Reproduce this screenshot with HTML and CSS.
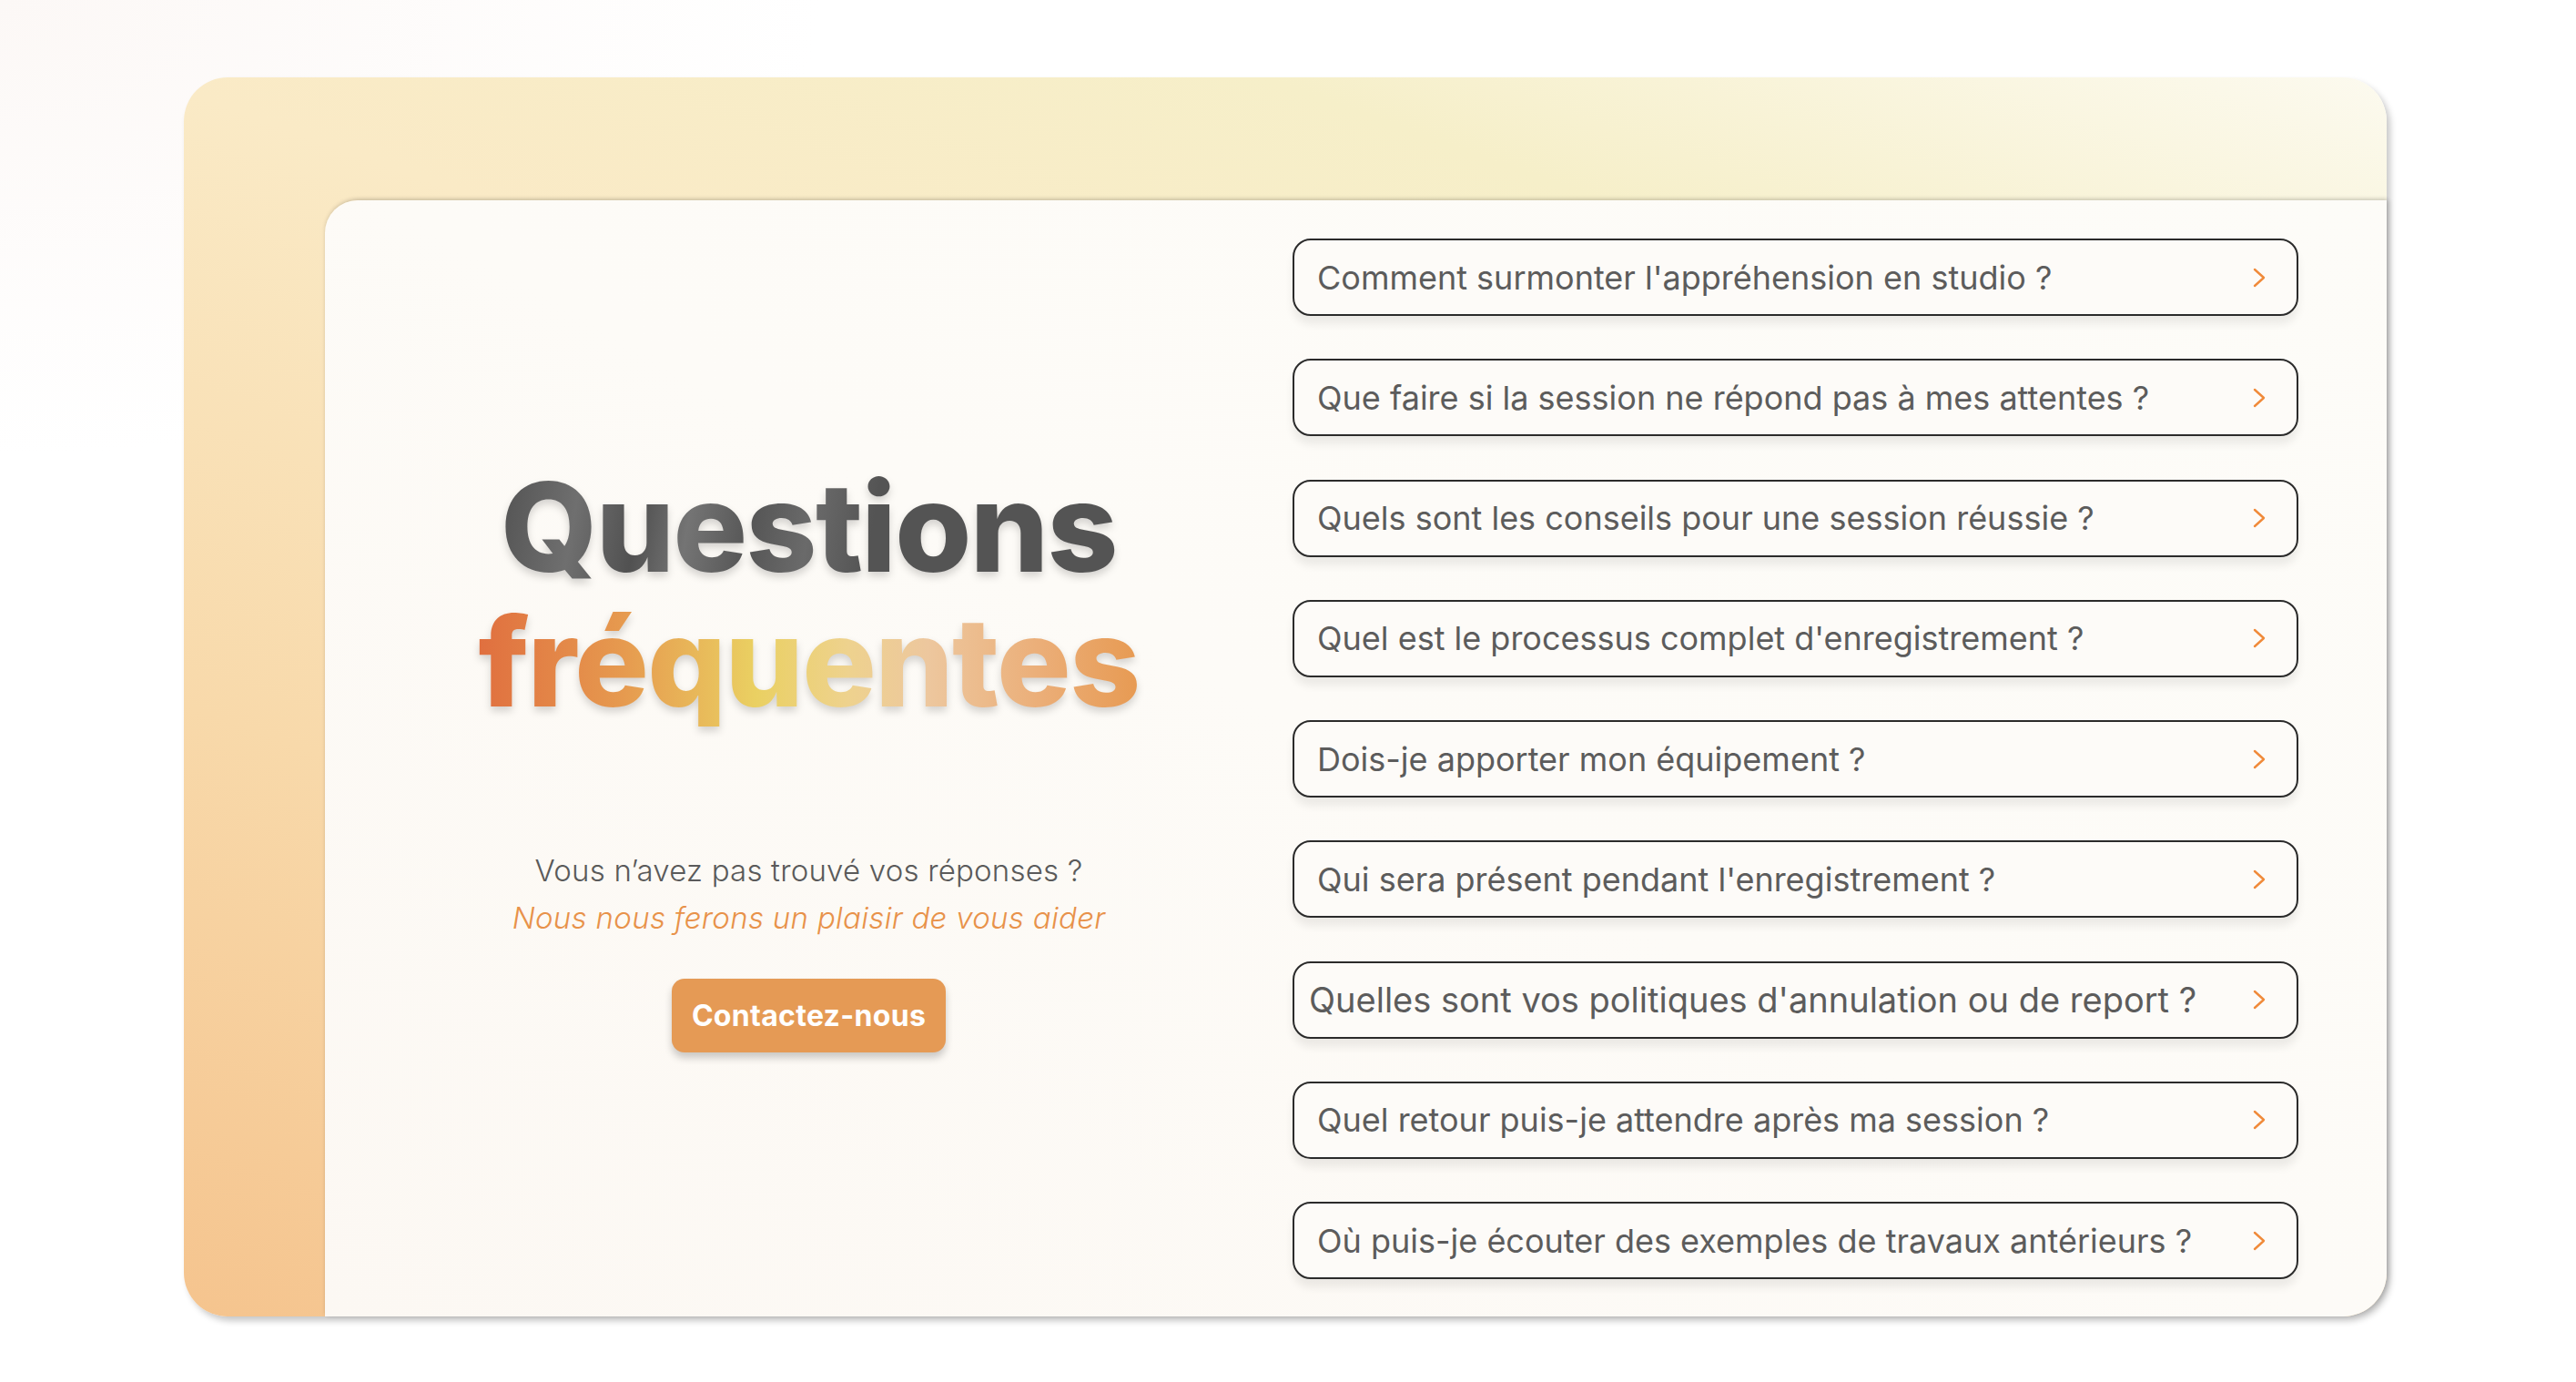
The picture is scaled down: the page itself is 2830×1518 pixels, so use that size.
FILE: index.html
```html
<!DOCTYPE html>
<html lang="fr">
<head>
<meta charset="utf-8">
<title>Questions fréquentes</title>
<link rel="stylesheet" href="styles.css">
</head>
<body>
<div class="page">
  <section class="frame">
    <div class="panel">
      <div class="intro">
        <h1 class="title">
          <span class="title-top">Questions</span>
          <span class="title-bottom">fréquentes</span>
        </h1>
        <p class="lead">Vous n’avez pas trouvé vos réponses ?</p>
        <p class="lead-accent">Nous nous ferons un plaisir de vous aider</p>
        <a class="cta" href="#">Contactez-nous</a>
      </div>
      <ul class="faq">
        <li class="faq-item"><span class="faq-q">Comment surmonter l'appréhension en studio ?</span><svg class="chev" viewBox="0 0 14 22"><polyline points="2,2 12,11 2,20"/></svg></li>
        <li class="faq-item"><span class="faq-q">Que faire si la session ne répond pas à mes attentes ?</span><svg class="chev" viewBox="0 0 14 22"><polyline points="2,2 12,11 2,20"/></svg></li>
        <li class="faq-item"><span class="faq-q">Quels sont les conseils pour une session réussie ?</span><svg class="chev" viewBox="0 0 14 22"><polyline points="2,2 12,11 2,20"/></svg></li>
        <li class="faq-item"><span class="faq-q">Quel est le processus complet d'enregistrement ?</span><svg class="chev" viewBox="0 0 14 22"><polyline points="2,2 12,11 2,20"/></svg></li>
        <li class="faq-item"><span class="faq-q">Dois-je apporter mon équipement ?</span><svg class="chev" viewBox="0 0 14 22"><polyline points="2,2 12,11 2,20"/></svg></li>
        <li class="faq-item"><span class="faq-q">Qui sera présent pendant l'enregistrement ?</span><svg class="chev" viewBox="0 0 14 22"><polyline points="2,2 12,11 2,20"/></svg></li>
        <li class="faq-item faq-item--long"><span class="faq-q">Quelles sont vos politiques d'annulation ou de report ?</span><svg class="chev" viewBox="0 0 14 22"><polyline points="2,2 12,11 2,20"/></svg></li>
        <li class="faq-item"><span class="faq-q">Quel retour puis-je attendre après ma session ?</span><svg class="chev" viewBox="0 0 14 22"><polyline points="2,2 12,11 2,20"/></svg></li>
        <li class="faq-item"><span class="faq-q">Où puis-je écouter des exemples de travaux antérieurs ?</span><svg class="chev" viewBox="0 0 14 22"><polyline points="2,2 12,11 2,20"/></svg></li>
      </ul>
    </div>
  </section>
</div>
</body>
</html>
```

FILE: styles.css
```css
* { box-sizing: border-box; }

html, body {
  margin: 0;
  padding: 0;
}

body {
  width: 2830px;
  height: 1518px;
  overflow: hidden;
  background: radial-gradient(ellipse 900px 500px at 0 0, #fcf8f6 0%, #ffffff 100%);
  font-family: "Inter", "Liberation Sans", sans-serif;
}

.page {
  padding: 85px 0 0 202px;
}

.frame {
  width: 2420px;
  height: 1361px;
  border-radius: 48px;
  padding: 135px 0 0 155px;
  background: linear-gradient(20deg, #f5c48e 0%, #f8d9aa 30%, #faeac6 60%, #f6efc9 80%, #fcfaef 100%);
  box-shadow: 4px 5px 7px rgba(0, 0, 0, 0.22);
  display: flex;
}

.panel {
  flex: 1;
  display: flex;
  border-radius: 36px 0 48px 0;
  background: linear-gradient(30deg, #fcf8f3 0%, #fdfbf7 50%, #fdfcf8 100%);
  box-shadow: 0 -2px 4px rgba(0, 0, 0, 0.12), 3px 0 5px rgba(0, 0, 0, 0.12);
  padding: 42px 97px 41px 0;
}

.intro {
  width: 1063px;
  display: flex;
  flex-direction: column;
  align-items: center;
  justify-content: center;
  padding-bottom: 4px;
}

.title {
  margin: 0;
  display: flex;
  flex-direction: column;
  align-items: center;
  font-family: "Inter", "Noto Sans", sans-serif;
  font-weight: 800;
  font-size: 136px;
  line-height: 142px;
  letter-spacing: -1.6px;
  filter: drop-shadow(0 5px 4px rgba(0, 0, 0, 0.16));
}

.title-top {
  background: linear-gradient(100deg, #525252 0%, #6f6f6f 13%, #515151 23%, #747474 31%, #565656 41%, #6a6a6a 50%, #545454 60%, #545454 100%);
  -webkit-background-clip: text;
  background-clip: text;
  color: transparent;
}

.title-bottom {
  margin-top: 6px;
  background: linear-gradient(90deg, #e06f3f 0%, #e69a4f 22%, #ead062 42%, #eed28e 56%, #edc79e 68%, #ebae78 85%, #e79a52 100%);
  -webkit-background-clip: text;
  background-clip: text;
  color: transparent;
}

.lead {
  margin: 137px 0 0;
  font-family: "Inter", "Noto Sans", sans-serif;
  font-weight: 300;
  font-size: 33px;
  line-height: 42px;
  letter-spacing: 0.2px;
  color: #5a5a5a;
}

.lead-accent {
  margin: 10px 0 0;
  font-family: "Inter", "Noto Sans", sans-serif;
  font-weight: 300;
  font-style: italic;
  font-size: 33px;
  line-height: 42px;
  letter-spacing: 0.3px;
  color: #e8924a;
}

.cta {
  margin-top: 46px;
  width: 301px;
  height: 81px;
  display: flex;
  align-items: center;
  justify-content: center;
  background: #e59a55;
  border-radius: 14px;
  box-shadow: 0 6px 8px rgba(0, 0, 0, 0.2);
  color: #ffffff;
  text-decoration: none;
  font-family: "Inter", "Liberation Sans", sans-serif;
  font-weight: 700;
  font-size: 32px;
  letter-spacing: 0.3px;
}

.faq {
  list-style: none;
  margin: 0;
  padding: 0;
  flex: 1;
  display: flex;
  flex-direction: column;
  justify-content: space-between;
}

.faq-item {
  height: 85px;
  display: flex;
  align-items: center;
  justify-content: space-between;
  border: 2px solid #2b2b2b;
  border-radius: 20px;
  padding: 0 34px 0 25px;
  background: #fdfbf8;
  box-shadow: 0 9px 10px rgba(0, 0, 0, 0.07);
}

.faq-item--long {
  padding-left: 16px;
}

.faq-q {
  font-family: "Inter", "Liberation Sans", sans-serif;
  font-size: 36px;
  color: #5c5c5c;
  letter-spacing: 0;
}

.faq-item--long .faq-q {
  font-size: 38px;
}

.chev {
  width: 14px;
  height: 22px;
  flex: none;
}

.chev polyline {
  fill: none;
  stroke: #f08a3a;
  stroke-width: 2.4;
  stroke-linecap: round;
  stroke-linejoin: round;
}
```
